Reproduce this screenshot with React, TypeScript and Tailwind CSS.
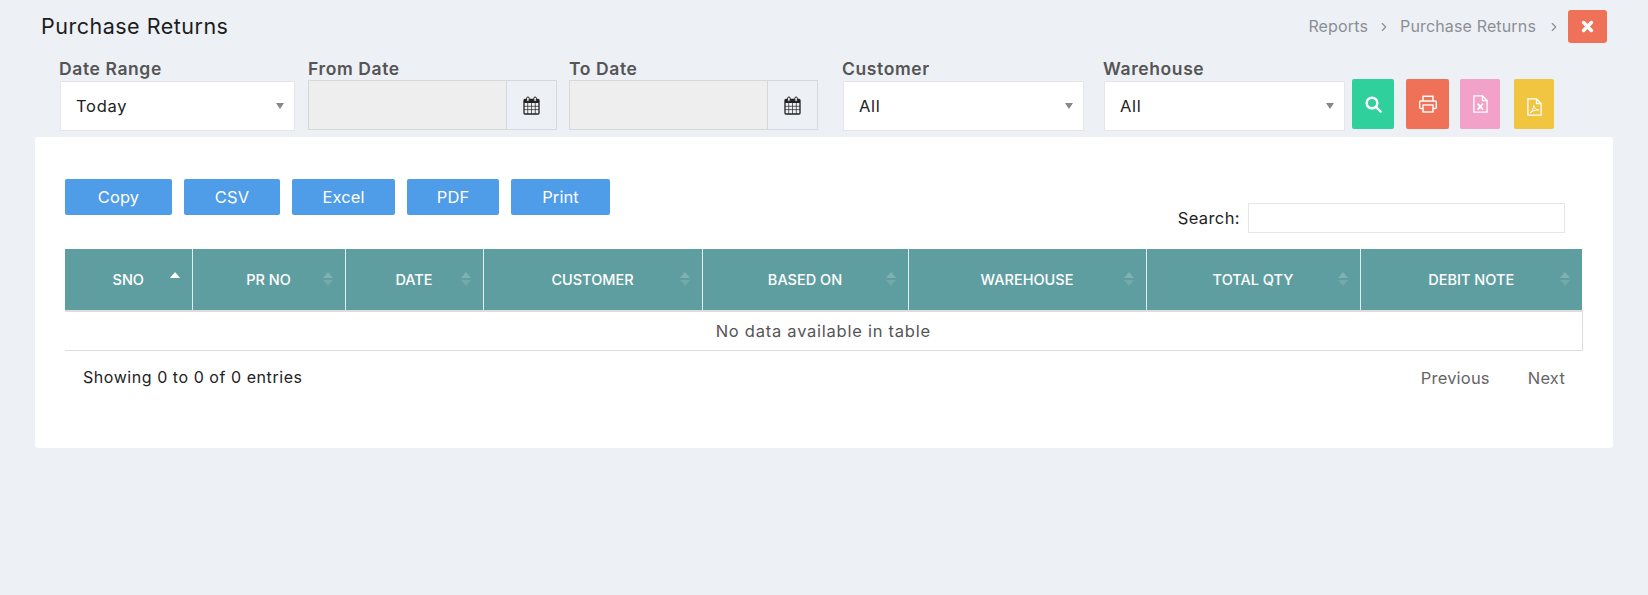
import { FiChevronRight } from "react-icons/fi";

const font = { sans: "font-['Inter','Noto_Sans',sans-serif]" };

const CalendarIcon = () => (
  <svg width="17" height="19" viewBox="0 0 17 19" className="text-[#222]">
    <rect x="1" y="3.5" width="15" height="14.5" rx="1" fill="none" stroke="currentColor" strokeWidth="1.3" />
    <rect x="1" y="3.5" width="15" height="3.5" fill="currentColor" />
    <rect x="3.6" y="1" width="2.6" height="4.5" rx="1.3" fill="#edf0f5" stroke="currentColor" strokeWidth="1" />
    <rect x="10.8" y="1" width="2.6" height="4.5" rx="1.3" fill="#edf0f5" stroke="currentColor" strokeWidth="1" />
    <path d="M1 10.3h15M1 13.6h15M4.7 7v11M8.5 7v11M12.3 7v11" stroke="currentColor" strokeWidth="0.7" />
  </svg>
);

const CloseIcon = () => (
  <svg width="13" height="13" viewBox="0 0 13 13">
    <path d="M2.6 2.6l7.8 7.8M10.4 2.6l-7.8 7.8" stroke="white" strokeWidth="3.6" strokeLinecap="round" />
  </svg>
);

const SearchIcon = () => (
  <svg width="17" height="17" viewBox="0 0 17 17" fill="none">
    <circle cx="7" cy="7" r="5.3" stroke="white" strokeWidth="2.5" />
    <path d="M11 11l4.6 4.6" stroke="white" strokeWidth="2.2" strokeLinecap="round" />
  </svg>
);

const PrintIcon = () => (
  <svg width="18" height="18" viewBox="0 0 18 18" fill="none" stroke="white" strokeWidth="1.4">
    <path d="M4 6V1.2h10V6" />
    <path d="M4 13.5H1.8A1.1 1.1 0 0 1 .7 12.4V7.1A1.1 1.1 0 0 1 1.8 6h14.4a1.1 1.1 0 0 1 1.1 1.1v5.3a1.1 1.1 0 0 1-1.1 1.1H14" />
    <rect x="4" y="10" width="10" height="7" />
  </svg>
);

const ExcelIcon = () => (
  <svg width="15" height="18" viewBox="0 0 15 18" fill="none" stroke="white" strokeWidth="1.3">
    <path d="M.9.9h8.6l4.6 4.6v11.6H.9z" />
    <path d="M9.5.9v4.6h4.6" />
    <path d="M4.600 8.600l5.400 6M10 8.600l-5.400 6" strokeWidth="1.7" />
  </svg>
);

const PdfIcon = () => (
  <svg width="15" height="18" viewBox="0 0 15 18" fill="none" stroke="white" strokeWidth="1.3">
    <path d="M.9.9h8.6l4.6 4.6v11.6H.9z" />
    <path d="M9.5.9v4.6h4.6" />
    <path d="M2.800 15c2-1.200 3.600-4 4-7.600.6 2.600 2 4.400 5 4.600-3-.2-5.800.6-9 3z" strokeWidth="1" />
  </svg>
);

const Caret = () => (
  <span className="absolute right-[10px] top-[21px] h-0 w-0 border-x-[4px] border-t-[6px] border-x-transparent border-t-[#888]" />
);

const SelectBox = ({ label, value, width, className }: { label: string; value: string; width: string; className: string }) => (
  <div className={`${width} ${className}`}>
    <div className="h-6 text-[17.5px] leading-[23px] font-semibold tracking-[0.6px] text-[#555] -ml-px">{label}</div>
    <div className="relative h-[50px] border border-[#e4e6ea] bg-white pl-[15px] text-[16.5px] leading-[49px] tracking-[0.7px] text-[#222]">
      {value}
      <Caret />
    </div>
  </div>
);

const DateBox = ({ label, width, className }: { label: string; width: string; className: string }) => (
  <div className={`${width} ${className}`}>
    <div className="h-[23px] text-[17.5px] leading-[23px] font-semibold tracking-[0.6px] text-[#555]">{label}</div>
    <div className="flex h-[50px] border border-[#d6d8da]">
      <div className="flex-1 bg-[#eeeeee]" />
      <div className="flex w-[50px] items-center justify-center border-l border-[#d6d8da] bg-[#edf0f5]">
        <CalendarIcon />
      </div>
    </div>
  </div>
);

const columns = [
  { title: "SNO", width: "w-[127px]" },
  { title: "PR NO", width: "w-[153px]" },
  { title: "DATE", width: "w-[138px]" },
  { title: "CUSTOMER", width: "w-[219px]" },
  { title: "BASED ON", width: "w-[206px]" },
  { title: "WAREHOUSE", width: "w-[238px]" },
  { title: "TOTAL QTY", width: "w-[214px]" },
  { title: "DEBIT NOTE", width: "w-[222px]" },
];

const SortIcon = ({ active }: { active: boolean }) =>
  active ? (
    <span className="absolute right-[12px] top-[23px] h-0 w-0 border-x-[5px] border-b-[6px] border-x-transparent border-b-white" />
  ) : (
    <span className="absolute right-[12px] top-[23px] flex flex-col gap-[2px]">
      <span className="h-0 w-0 border-x-[5px] border-b-[6px] border-x-transparent border-b-[#7fb0b2]" />
      <span className="h-0 w-0 border-x-[5px] border-t-[6px] border-x-transparent border-t-[#74a8aa]" />
    </span>
  );

const App = () => {
  return (
    <div className={`min-h-[595px] w-[1648px] overflow-hidden bg-[#edf0f5] pt-[10px] ${font.sans}`}>
      <div className="flex h-[33px] items-center justify-between pl-[41px] pr-[41px]">
        <h1 className="text-[21.5px] leading-[33px] font-normal tracking-[0.5px] text-[#1c1c1c]">Purchase Returns</h1>
        <div className="flex items-center text-[16px] tracking-[0.15px] text-[#8b8f94]">
          <span className="-mt-[2px]">Reports</span>
          <FiChevronRight className="mx-[9px] h-[14px] w-[14px]" />
          <span className="-mt-[2px]">Purchase Returns</span>
          <FiChevronRight className="ml-[11px] mr-[7px] h-[14px] w-[14px]" />
          <button className="flex h-[33px] w-[39px] items-center justify-center rounded-[3px] bg-[#ef7158] text-white">
            <CloseIcon />
          </button>
        </div>
      </div>

      <div className="mt-[14px] flex items-end pl-[60px]">
        <SelectBox label="Date Range" value="Today" width="w-[235px]" className="" />
        <DateBox label="From Date" width="w-[249px]" className="ml-[13px] mb-px" />
        <DateBox label="To Date" width="w-[249px]" className="ml-[12px] mb-px" />
        <SelectBox label="Customer" value="All" width="w-[241px]" className="ml-[25px]" />
        <SelectBox label="Warehouse" value="All" width="w-[241px]" className="ml-[20px]" />
        <div className="mb-[2px] flex text-white">
          <button className="ml-[7px] flex h-[50px] w-[42px] items-center justify-center rounded-[2px] bg-[#2fd09b]">
            <SearchIcon />
          </button>
          <button className="ml-[12px] flex h-[50px] w-[43px] items-center justify-center rounded-[2px] bg-[#ef7158]">
            <PrintIcon />
          </button>
          <button className="ml-[11px] flex h-[50px] w-[40px] items-center justify-center rounded-[2px] bg-[#f2a1c8]">
            <ExcelIcon />
          </button>
          <button className="ml-[14px] flex h-[50px] w-[40px] items-center justify-center rounded-[2px] bg-[#f1c540] pt-[5px]">
            <PdfIcon />
          </button>
        </div>
      </div>

      <div className="ml-[35px] mt-[6px] h-[311px] w-[1578px] rounded-[3px] bg-white pl-[30px] pt-[42px]">
        <div className="flex text-[16.5px] tracking-[0.1px] text-white">
          <button className="h-[36px] w-[107px] rounded-[2px] bg-[#4f9ce8]">Copy</button>
          <button className="ml-[12px] h-[36px] w-[96px] rounded-[2px] bg-[#4f9ce8]">CSV</button>
          <button className="ml-[12px] h-[36px] w-[103px] rounded-[2px] bg-[#4f9ce8]">Excel</button>
          <button className="ml-[12px] h-[36px] w-[92px] rounded-[2px] bg-[#4f9ce8]">PDF</button>
          <button className="ml-[12px] h-[36px] w-[99px] rounded-[2px] bg-[#4f9ce8]">Print</button>
        </div>

        <div className="mt-[-12px] flex h-[30px] w-[1500px] items-center justify-end text-[16.5px] tracking-[0.4px] text-[#222]">
          <span>Search:</span>
          <div className="ml-[8px] h-[30px] w-[317px] border border-[#e4e6ea] bg-white" />
        </div>

        <table className="mt-[16px] w-[1517px] table-fixed border-collapse">
          <thead>
            <tr className="h-[62px] bg-[#5f9ea0] text-white">
              {columns.map((col, i) => (
                <th
                  key={col.title}
                  className={`relative ${col.width} p-0 text-center text-[14.5px] font-medium ${i < columns.length - 1 ? "border-r border-[#e4eeee]" : ""}`}
                >
                  {col.title}
                  <SortIcon active={i === 0} />
                </th>
              ))}
            </tr>
          </thead>
          <tbody>
            <tr className="h-[39px] border-t-2 border-b border-[#dddddd]">
              <td colSpan={8} className="border-r border-[#dddddd] pt-px text-center text-[16.5px] tracking-[0.75px] text-[#555]">
                No data available in table
              </td>
            </tr>
          </tbody>
        </table>

        <div className="flex h-[54px] w-[1500px] items-center justify-between pl-[18px] text-[16px]">
          <span className="mb-[2px] tracking-[0.55px] text-[#222]">Showing 0 to 0 of 0 entries</span>
          <div className="mt-[2px] flex text-[16.5px] tracking-[0.2px] text-[#666]">
            <span>Previous</span>
            <span className="ml-[38px]">Next</span>
          </div>
        </div>
      </div>
    </div>
  );
};

export default App;
